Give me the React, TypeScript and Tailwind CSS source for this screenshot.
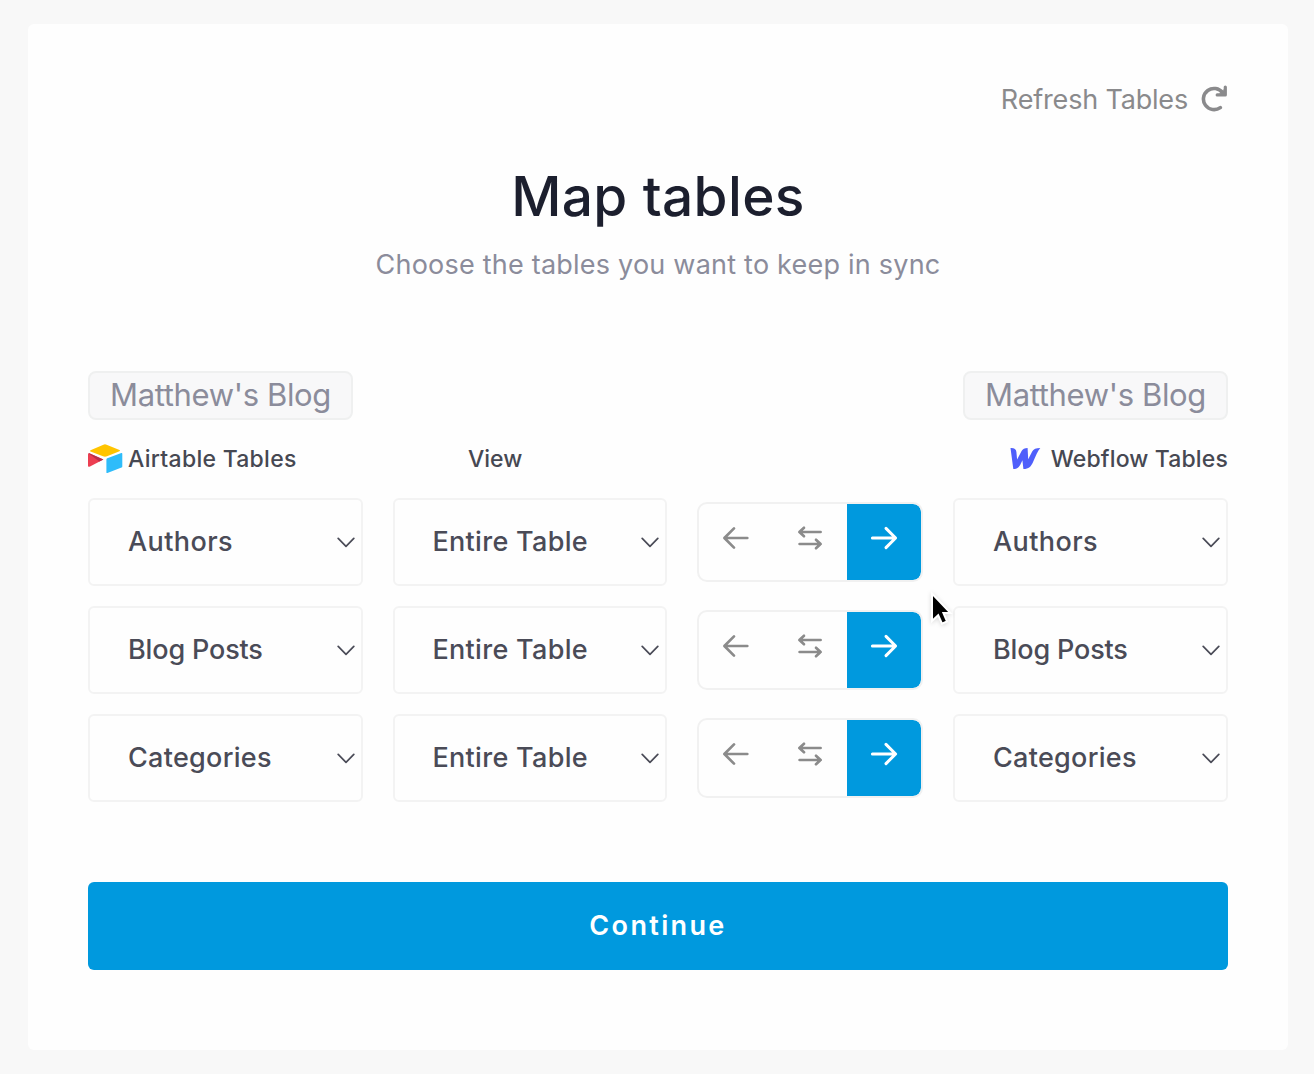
import type { ReactNode } from 'react';

const stroke = { fill: 'none', stroke: 'currentColor', strokeLinecap: 'round', strokeLinejoin: 'round' } as const;

function RefreshIcon() {
  return (
    <svg className="-mt-1" width="28" height="28" viewBox="0 0 28 28" {...stroke} strokeWidth="3.6">
      <path d="M20.3 23.6A10.6 10.6 0 1 1 22.6 8.8" />
      <path d="M25.3 3V10.9H17.2" strokeWidth="3.2" />
      <path d="M25 5V10.5H19.5Z" fill="currentColor" strokeWidth="1" />
    </svg>
  );
}

function AirtableLogo() {
  return (
    <svg width="36" height="30" viewBox="0 0 36 30">
      <path d="M2.5 6.2 15.4.7Q17 0 18.6.7L31.5 6Q32.6 6.6 31.5 7.2L19 12.3Q17 13 15 12.3L2.5 7.5Q1.5 6.9 2.5 6.2Z" fill="#ffc400" />
      <path d="M18.4 15.4Q18.4 14.5 19.3 14.2L33.3 9Q34.3 8.8 34.3 9.7V22.5Q34.3 23.3 33.5 23.6L19.4 29Q18.4 29.3 18.4 28.4Z" fill="#2ebcfa" />
      <path d="M0 10.3Q0 8.8 1.3 9.3L15.4 15.5 2 22.4Q0 23.3 0 22Z" fill="#ec3e51" />
      <path d="M1.3 9.3 15.4 15.5 11.4 17.5 0.6 9.6Z" fill="#b92e48" />
    </svg>
  );
}

function WebflowLogo() {
  return (
    <svg className="-mt-px mr-px" width="31" height="23" viewBox="0 0 31 23">
      <path
        d="M.5 1Q6 .6 6.4 5L7.1 12.5 11.6 4Q13.2 1 17.6 1L18.2 12.2 22.2 4.4Q24 1 30.3 1C27.8 4 25.6 9.2 23.4 14.2 21 19.7 18.8 22 13.4 22L12.4 13.2C9.6 19.6 8.3 22 3.3 22Z"
        fill="#4f5ffb"
      />
    </svg>
  );
}

function Chevron() {
  return (
    <svg width="18" height="11" viewBox="0 0 18 11" {...stroke} strokeWidth="1.7">
      <path d="M1.2 1.4 9 9.3 16.8 1.4" />
    </svg>
  );
}

function ArrowLeft() {
  return (
    <svg width="28" height="24" viewBox="0 0 28 24" {...stroke} strokeWidth="2.7">
      <path d="M25.3 12H3M12 2.4 2.4 12 12 21.6" />
    </svg>
  );
}

function ArrowRight() {
  return (
    <svg width="28" height="24" viewBox="0 0 28 24" {...stroke} strokeWidth="3">
      <path d="M2.4 12H25.5M16 2.4 25.6 12 16 21.6" />
    </svg>
  );
}

function ArrowsBoth() {
  return (
    <svg width="28" height="26" viewBox="0 0 28 26" {...stroke} strokeWidth="2.7">
      <path d="M24.6 7H3.6M8 2.8 3.4 7 8 11.2M3.6 19H24.6M20 14.8 24.6 19 20 23.2" />
    </svg>
  );
}

function Select({ children, className }: { children: ReactNode; className: string }) {
  return (
    <button className="flex h-[88px] items-center justify-between rounded-md border-2 border-[#f3f3f3] pr-1.5 pl-[38px] text-[27px] font-medium text-[#4a4b57]">
      <span className={className}>{children}</span>
      <Chevron />
    </button>
  );
}

function Direction() {
  return (
    <div className="my-1 grid h-20 grid-cols-[74px_74px_74px] overflow-hidden rounded-[10px] border-2 border-[#f1f1f1] text-[#8b8b8b]">
      <button className="flex items-center justify-center pb-2"><ArrowLeft /></button>
      <button className="flex items-center justify-center pb-2"><ArrowsBoth /></button>
      <button className="flex items-center justify-center rounded-r-lg bg-[#0099de] pb-2 text-white"><ArrowRight /></button>
    </div>
  );
}

function BlogBadge() {
  return (
    <div className="flex h-[49px] w-[265px] items-center justify-center rounded-lg border-2 border-[#eff0f0] bg-[#f8f8f9] text-[31px] tracking-[-0.35px] text-[#8b8c9b]">
      Matthew's Blog
    </div>
  );
}

const rows = [
  { name: 'Authors', spacing: 'tracking-[0.4px]' },
  { name: 'Blog Posts', spacing: 'tracking-[-0.15px]' },
  { name: 'Categories', spacing: 'tracking-[0.28px]' },
];

export default function App() {
  return (
    <div className="h-[1074px] w-[1314px] bg-[#f8f8f8] pt-6 pl-7 font-[Inter,sans-serif]">
      <main className="relative h-[1026px] w-[1260px] rounded-md bg-[#fefefe] px-[60px] pt-[54px]">
        <button className="ml-auto flex h-11 items-center gap-3 text-[27px] tracking-[-0.18px] text-[#8a8a8c]">
          Refresh Tables
          <RefreshIcon />
        </button>
        <h1 className="mt-[38px] text-center text-[55px] leading-[72px] font-[550] tracking-[0.35px] text-[#1c1f2e]">Map tables</h1>
        <p className="mt-[13px] text-center text-[27px] leading-10 tracking-[0.22px] text-[#8b8c9b]">Choose the tables you want to keep in sync</p>

        <div className="mt-[86px] flex justify-between">
          <BlogBadge />
          <BlogBadge />
        </div>

        <div className="mt-[19px] grid h-10 grid-cols-[275px_274px_225px_276px] items-center gap-x-[30px] text-[23px] font-medium text-[#464852]">
          <div className="flex items-center gap-1 tracking-[0.28px]"><AirtableLogo />Airtable Tables</div>
          <div className="pl-[75px]">View</div>
          <div />
          <div className="flex items-center justify-end gap-[9px] tracking-[0.15px]"><WebflowLogo />Webflow Tables</div>
        </div>

        <div className="mt-[19px] grid grid-cols-[275px_274px_226px_275px] gap-x-[30px] gap-y-5">
          {rows.map(({ name, spacing }) => (
            <div className="contents" key={name}>
              <Select className={spacing}>{name}</Select>
              <Select className="-ml-[0.5px] tracking-[0.3px]">Entire Table</Select>
              <Direction />
              <Select className={spacing}>{name}</Select>
            </div>
          ))}
        </div>

        <button className="mt-20 flex h-[88px] w-full items-center justify-center rounded-md bg-[#0099de] text-[27px] font-semibold tracking-[2.35px] text-white">
          Continue
        </button>

        <svg className="absolute top-[567px] left-[901px] drop-shadow-sm" width="24" height="36" viewBox="0 0 24 36">
          <path d="M3 2.5V30L9.2 24.2 13 32.6 18 30.4 14.4 22H21.5Z" fill="#000" stroke="#fff" strokeWidth="2" />
        </svg>
      </main>
    </div>
  );
}
